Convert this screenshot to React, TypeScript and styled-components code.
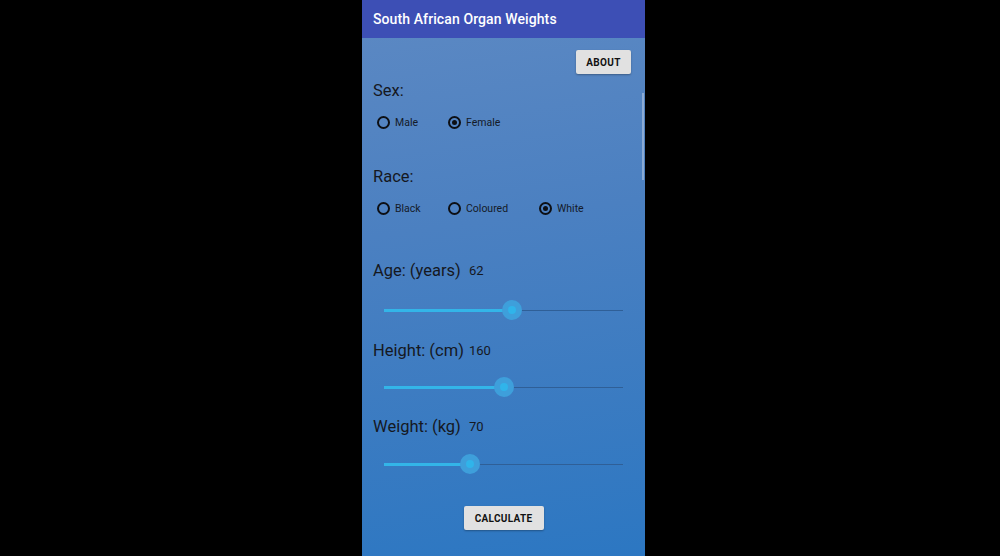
import React from 'react';
import styled, { createGlobalStyle } from 'styled-components';

const GlobalStyle = createGlobalStyle`
  html, body {
    margin: 0;
    padding: 0;
    background: #000;
    font-family: Roboto, "Noto Sans", "Liberation Sans", sans-serif;
  }
  #root {
    width: 1000px;
    height: 556px;
    overflow: hidden;
  }
`;

const Screen = styled.div`
  position: relative;
  margin-left: 362px;
  width: 283px;
  height: 556px;
  display: flex;
  flex-direction: column;
  background: linear-gradient(172deg, #5d89c3 0%, #4b80c1 40%, #2c77c2 100%);
  overflow: hidden;
`;

const AppBar = styled.div`
  height: 38px;
  flex: none;
  display: flex;
  align-items: center;
  padding-left: 11px;
  background: #3d4fb5;
  color: #fff;
  font-size: 14px;
  font-weight: 500;
  letter-spacing: 0.1px;
`;

const Content = styled.div`
  display: flex;
  flex-direction: column;
  padding: 0 14px 0 11px;
`;

const TopRow = styled.div`
  display: flex;
  justify-content: flex-end;
  margin-top: 12px;
`;

const FlatButton = styled.button<{ $w: number }>`
  width: ${(p) => p.$w}px;
  height: 24px;
  padding: 0;
  border: none;
  border-radius: 2px;
  background: #e1e1e1;
  box-shadow: 0 1px 2px rgba(0, 0, 0, 0.3);
  color: #111;
  font-family: Roboto, "Liberation Sans", sans-serif;
  font-size: 10px;
  font-weight: 700;
  letter-spacing: 0.3px;
`;

const SectionLabel = styled.div<{ $top: number }>`
  margin-top: ${(p) => p.$top}px;
  height: 20px;
  line-height: 22px;
  font-size: 16.5px;
  color: #15181f;
`;

const RadioRow = styled.div`
  display: flex;
  margin-top: 12px;
  padding-left: 4px;
  height: 20px;
  align-items: center;
`;

const RadioItem = styled.div<{ $w: number }>`
  width: ${(p) => p.$w}px;
  display: flex;
  align-items: center;
  gap: 5px;
  font-size: 10.5px;
  color: #141a28;
`;

const Circle = styled.span<{ $on: boolean }>`
  box-sizing: border-box;
  width: 13px;
  height: 13px;
  border-radius: 50%;
  border: 2px solid #0d0f14;
  display: flex;
  align-items: center;
  justify-content: center;
  &::after {
    content: '';
    display: ${(p) => (p.$on ? 'block' : 'none')};
    width: 5px;
    height: 5px;
    border-radius: 50%;
    background: #0d0f14;
  }
`;

const ValueRow = styled.div<{ $top: number }>`
  display: grid;
  grid-template-columns: 96px auto;
  align-items: center;
  margin-top: ${(p) => p.$top}px;
  height: 20px;
  color: #15181f;
`;

const ValueLabel = styled.span`
  font-size: 16.5px;
`;

const Value = styled.span`
  font-size: 13px;
`;

const SliderRow = styled.div<{ $top: number }>`
  margin-top: ${(p) => p.$top}px;
  height: 20px;
  padding: 0 8px 0 11px;
  display: flex;
  align-items: center;
`;

const Track = styled.div`
  position: relative;
  flex: 1;
  height: 1px;
  background: #2f5f97;
`;

const Fill = styled.div`
  position: absolute;
  left: 0;
  top: -1px;
  height: 3px;
  background: #33b5e8;
`;

const Thumb = styled.div`
  position: absolute;
  top: -10px;
  width: 20px;
  height: 20px;
  margin-left: -10px;
  border-radius: 50%;
  background: #3e9fdb;
  display: flex;
  align-items: center;
  justify-content: center;
  &::after {
    content: '';
    width: 8px;
    height: 8px;
    border-radius: 50%;
    background: #30b4ea;
  }
`;

const BottomRow = styled.div`
  display: flex;
  justify-content: center;
  margin-top: 32px;
  padding-left: 3px;
`;

const ScrollBar = styled.div`
  position: absolute;
  right: 1px;
  top: 93px;
  width: 2px;
  height: 87px;
  background: rgba(210, 220, 235, 0.45);
`;

const Radio = ({ label, on, w }: { label: string; on?: boolean; w: number }) => (
  <RadioItem $w={w}>
    <Circle $on={!!on} />
    {label}
  </RadioItem>
);

const Slider = ({ pos, top }: { pos: number; top: number }) => (
  <SliderRow $top={top}>
    <Track>
      <Fill style={{ width: `calc(${pos * 100}% - 9px)` }} />
      <Thumb style={{ left: `${pos * 100}%` }} />
    </Track>
  </SliderRow>
);

const App = () => {
  return (
    <>
      <GlobalStyle />
      <Screen>
        <AppBar>South African Organ Weights</AppBar>
        <Content>
          <TopRow>
            <FlatButton $w={55}>ABOUT</FlatButton>
          </TopRow>
          <SectionLabel $top={6}>Sex:</SectionLabel>
          <RadioRow>
            <Radio label="Male" w={71} />
            <Radio label="Female" on w={80} />
          </RadioRow>
          <SectionLabel $top={34}>Race:</SectionLabel>
          <RadioRow>
            <Radio label="Black" w={71} />
            <Radio label="Coloured" w={91} />
            <Radio label="White" on w={70} />
          </RadioRow>
          <ValueRow $top={42}>
            <ValueLabel>Age: (years)</ValueLabel>
            <Value>62</Value>
          </ValueRow>
          <Slider pos={0.5375} top={20} />
          <ValueRow $top={20}>
            <ValueLabel>Height: (cm)</ValueLabel>
            <Value>160</Value>
          </ValueRow>
          <Slider pos={0.504} top={17} />
          <ValueRow $top={19}>
            <ValueLabel>Weight: (kg)</ValueLabel>
            <Value>70</Value>
          </ValueRow>
          <Slider pos={0.358} top={18} />
          <BottomRow>
            <FlatButton $w={80}>CALCULATE</FlatButton>
          </BottomRow>
        </Content>
        <ScrollBar />
      </Screen>
    </>
  );
};

export default App;
